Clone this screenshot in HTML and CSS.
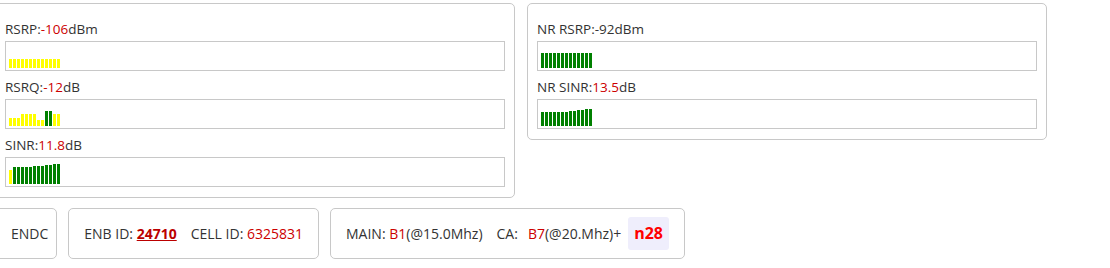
FILE: index.html
```html
<!DOCTYPE html>
<html lang="en">
<head>
    <meta charset="UTF-8">
    <meta name="viewport" content="width=device-width, initial-scale=1.0">
    <title>Signal</title>
    <link rel="stylesheet" href="styles.css">
</head>
<body>
    <div class="page">
        <div class="panels">
            <div class="panel">
                <div class="label">RSRP:<span class="val">-106</span>dBm</div>
                <div class="meter" id="rsrp"></div>
                <div class="label">RSRQ:<span class="val">-12</span>dB</div>
                <div class="meter" id="rsrq"></div>
                <div class="label">SINR:<span class="val">11.8</span>dB</div>
                <div class="meter" id="sinr"></div>
            </div>
            <div class="panel">
                <div class="label">NR RSRP:-92dBm</div>
                <div class="meter" id="nr-rsrp"></div>
                <div class="label">NR SINR:<span class="val">13.5</span>dB</div>
                <div class="meter" id="nr-sinr"></div>
            </div>
        </div>
        <div class="info">
            <div class="chip chip-mode"><span>ENDC</span></div>
            <div class="chip">
                <span>ENB ID:&nbsp;<a class="enb">24710</a><span class="gap">CELL ID:&nbsp;<span class="val">6325831</span></span></span>
            </div>
            <div class="chip">
                <span>MAIN:&nbsp;<span class="val">B1</span>(@15.0Mhz)<span class="gap">CA:</span><span class="gap-s"><span class="val">B7</span>(@20.Mhz)+</span></span>
                <span class="band">n28</span>
            </div>
        </div>
    </div>
    <script>
        // y = yellow, g = green
        const meters = {
            'rsrp': [[9,'y'],[9,'y'],[9,'y'],[9,'y'],[9,'y'],[9,'y'],[9,'y'],[9,'y'],[9,'y'],[9,'y'],[9,'y'],[9,'y'],[9,'y']],
            'rsrq': [[8,'y'],[8,'y'],[8,'y'],[12,'y'],[12,'y'],[12,'y'],[12,'y'],[6,'y'],[6,'y'],[15,'g'],[15,'g'],[12,'y'],[12,'y']],
            'sinr': [[14,'y'],[17,'g'],[17,'g'],[17,'g'],[17,'g'],[17,'g'],[18,'g'],[18,'g'],[18,'g'],[19,'g'],[19,'g'],[20,'g'],[20,'g']],
            'nr-rsrp': [[15,'g'],[15,'g'],[15,'g'],[15,'g'],[15,'g'],[15,'g'],[15,'g'],[15,'g'],[15,'g'],[15,'g'],[15,'g'],[15,'g'],[15,'g']],
            'nr-sinr': [[14,'g'],[14,'g'],[14,'g'],[14,'g'],[14,'g'],[14,'g'],[14,'g'],[15,'g'],[15,'g'],[16,'g'],[16,'g'],[17,'g'],[17,'g']]
        };

        Object.keys(meters).forEach(id => {
            const el = document.getElementById(id);
            meters[id].forEach(([h, c]) => {
                const bar = document.createElement('span');
                bar.className = 'bar ' + (c === 'g' ? 'green' : 'yellow');
                bar.style.height = h + 'px';
                el.appendChild(bar);
            });
        });
    </script>
</body>
</html>
```

FILE: styles.css
```css
* {
    box-sizing: border-box;
}
body {
    font-family: "Open Sans", "Noto Sans", sans-serif;
    font-size: 13.5px;
    color: #333;
    background-color: #fff;
    margin: 0;
    padding: 3px 0 0 0;
}
.page {
    margin-left: -5px;
}
.panels {
    display: flex;
    align-items: flex-start;
    gap: 12px;
}
.panel {
    width: 520px;
    padding: 9px 9px 10px 9px;
    border: 1px solid #c8c8c8;
    border-radius: 5px;
}
.label {
    line-height: 18px;
    padding-top: 7px;
    margin-bottom: 3px;
}
.val {
    color: #c00;
}
.meter {
    height: 30px;
    border: 1px solid #c8c8c8;
    display: flex;
    align-items: flex-end;
    padding: 0 3px 2px 3px;
}
.bar {
    width: 3px;
    margin-right: 1px;
}
.bar.yellow {
    background-color: #ffff00;
}
.bar.green {
    background-color: #008000;
}
.info {
    display: flex;
    gap: 11px;
    margin-top: 10px;
    font-size: 14px;
}
.chip {
    display: flex;
    align-items: center;
    height: 51px;
    padding: 0 15px;
    border: 1px solid #c8c8c8;
    border-radius: 5px;
    white-space: nowrap;
}
.chip-mode {
    padding-right: 8px;
}
.enb {
    color: #b00;
    font-weight: bold;
    text-decoration: underline;
}
.gap {
    margin-left: 14px;
}
.gap-s {
    margin-left: 10px;
}
.band {
    margin-left: 7px;
    padding: 0 6px;
    height: 33px;
    line-height: 33px;
    background-color: #efeefc;
    border-radius: 3px;
    color: #f00;
    font-weight: bold;
    font-size: 16px;
}
```
